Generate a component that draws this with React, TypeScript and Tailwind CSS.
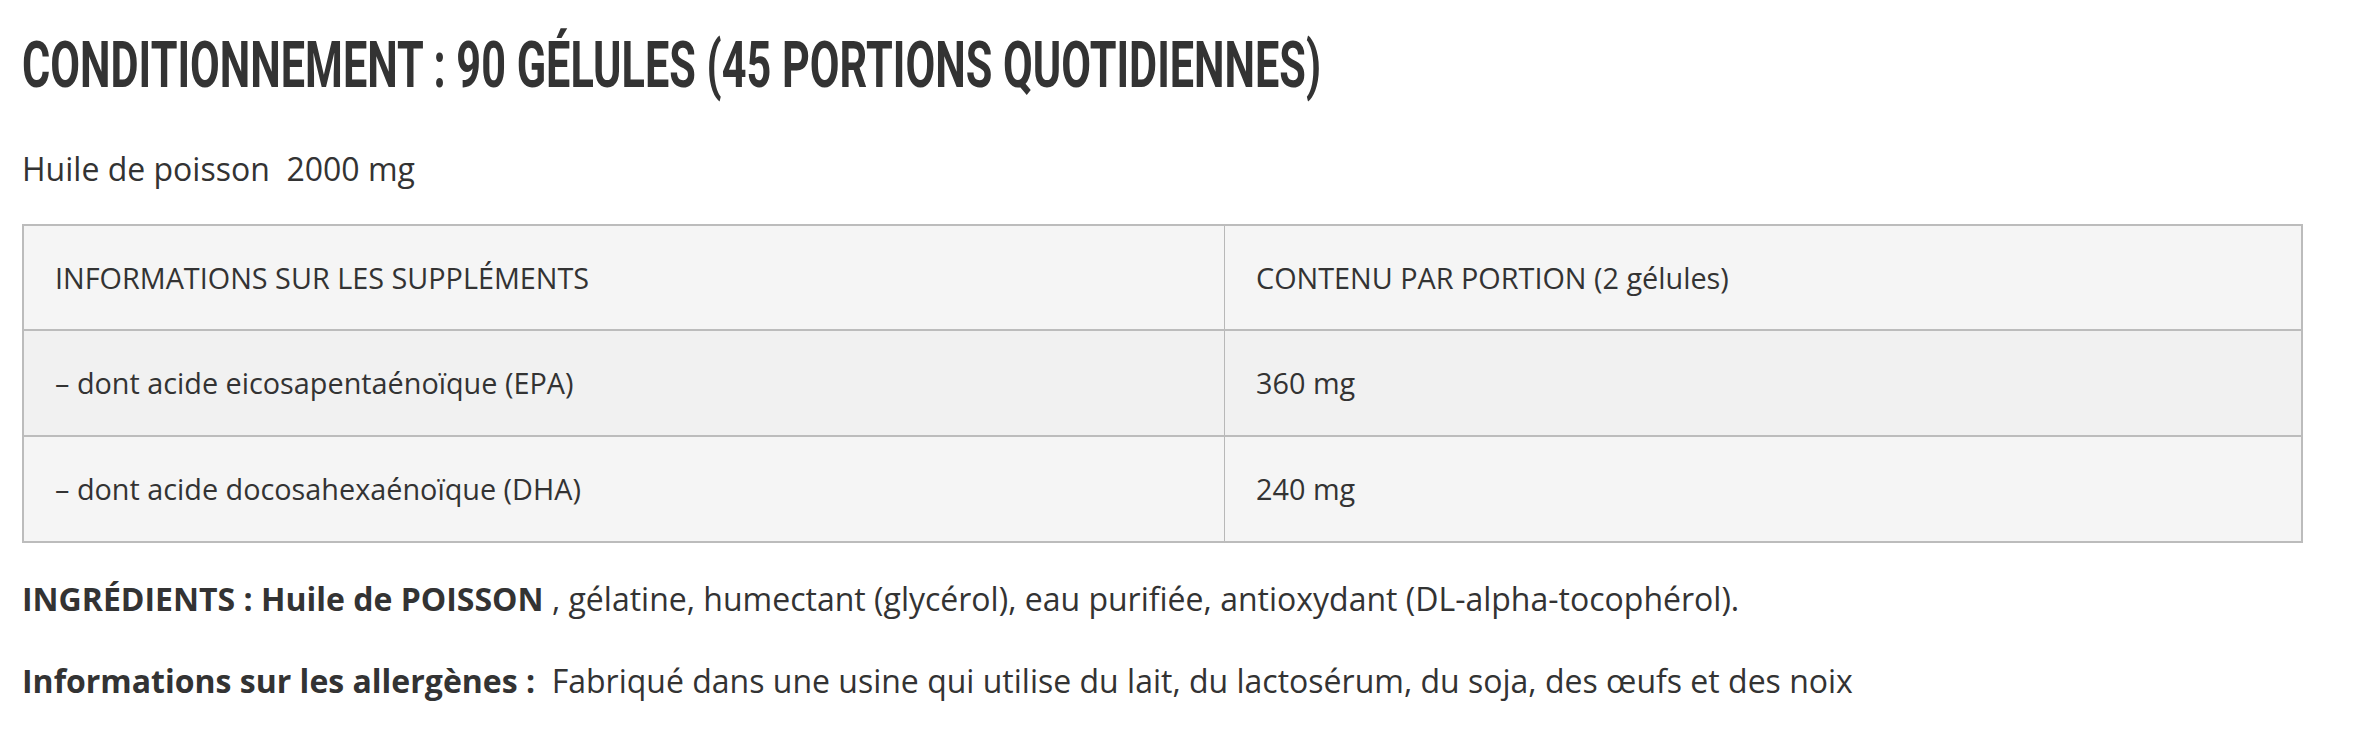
import React from "react";

export default function App() {
  return (
    <div className="w-[2356px] min-h-[730px] bg-white pl-[22px] text-[#333333] font-['Open_Sans',sans-serif]">
      <h1 className="pt-[34px] font-['Roboto',sans-serif] font-bold text-[64px] leading-none uppercase whitespace-nowrap origin-left scale-x-[0.675] text-[#333333]">
        CONDITIONNEMENT : 90 GÉLULES (45 PORTIONS QUOTIDIENNES)
      </h1>
      <p className="mt-[51px] text-[32px] leading-[40px] whitespace-pre">Huile de poisson  2000 mg</p>
      <div className="mt-[35px] w-[2281px] border-2 border-[#bcbcbc] text-[28.8px] leading-[40px]">
        <div className="grid grid-cols-[1200px_1fr] h-[103px] bg-[#f5f5f5]">
          <div className="flex items-center pl-[31px]">INFORMATIONS SUR LES SUPPLÉMENTS</div>
          <div className="flex items-center pl-[31px] border-l border-[#b8b8b8]">CONTENU PAR PORTION (2 gélules)</div>
        </div>
        <div className="grid grid-cols-[1200px_1fr] h-[106px] bg-[#f1f1f1] border-t-2 border-[#bcbcbc]">
          <div className="flex items-center pl-[31px]">– dont acide eicosapentaénoïque (EPA)</div>
          <div className="flex items-center pl-[31px] border-l border-[#b8b8b8]">360 mg</div>
        </div>
        <div className="grid grid-cols-[1200px_1fr] h-[106px] bg-[#f5f5f5] border-t-2 border-[#bcbcbc]">
          <div className="flex items-center pl-[31px]">– dont acide docosahexaénoïque (DHA)</div>
          <div className="flex items-center pl-[31px] border-l border-[#b8b8b8]">240 mg</div>
        </div>
      </div>
      <p className="mt-[36px] text-[32px] leading-[40px] whitespace-pre">
        <strong className="font-bold">INGRÉDIENTS : Huile de POISSON</strong> , gélatine, humectant (glycérol), eau purifiée, antioxydant (DL-alpha-tocophérol).
      </p>
      <p className="mt-[42px] text-[32px] leading-[40px] whitespace-pre">
        <strong className="font-bold">Informations sur les allergènes :</strong>  Fabriqué dans une usine qui utilise du lait, du lactosérum, du soja, des œufs et des noix
      </p>
    </div>
  );
}
